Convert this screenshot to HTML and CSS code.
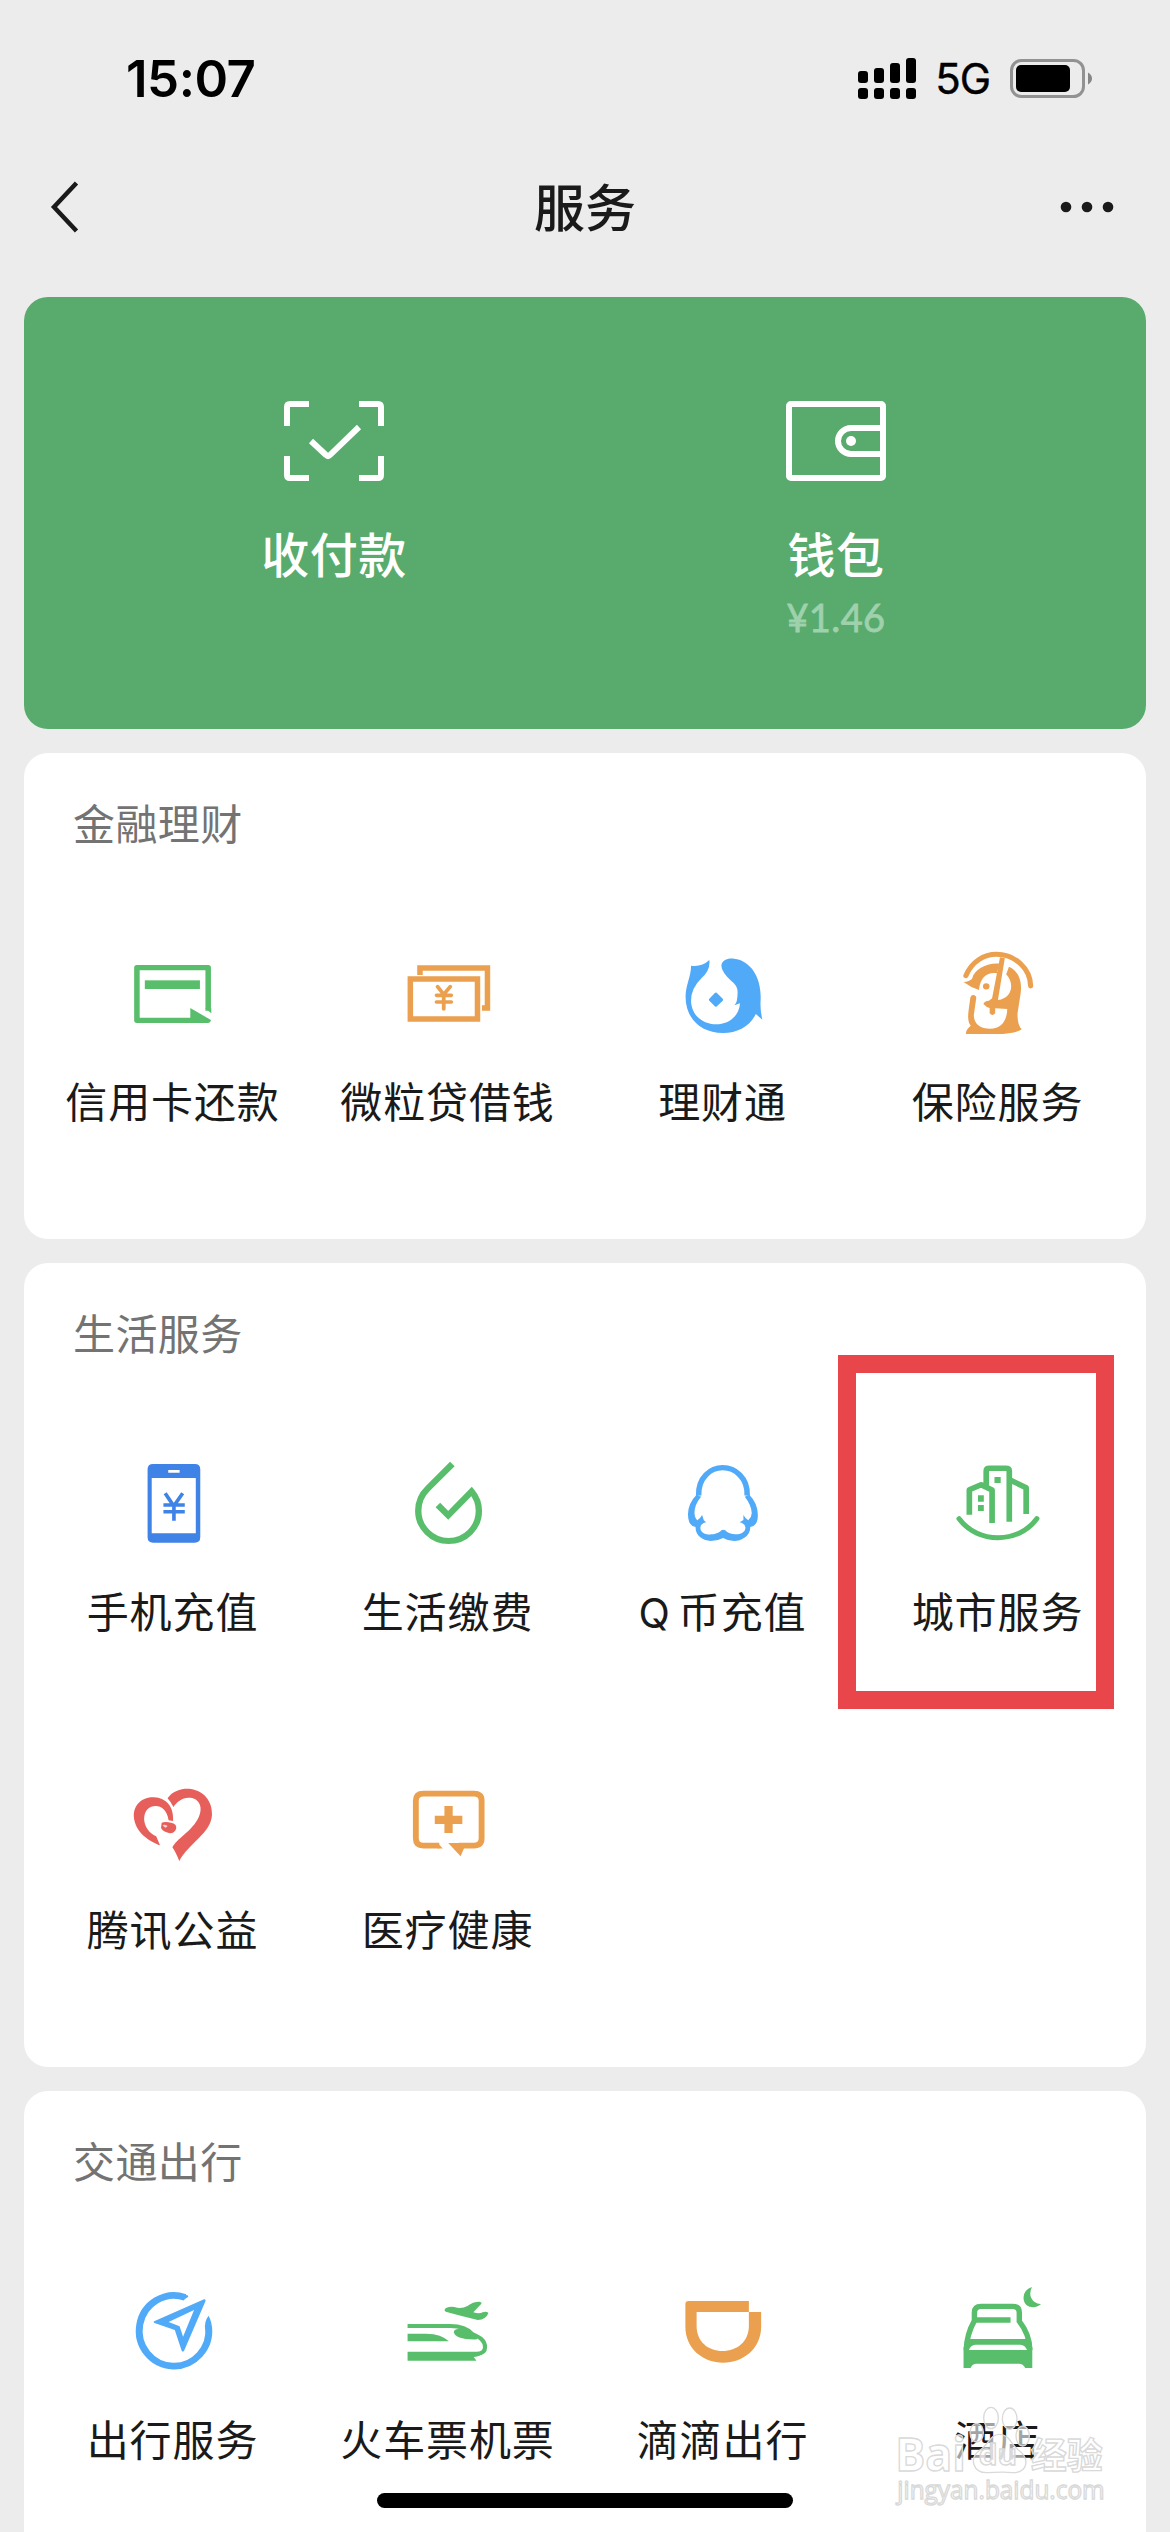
FILE: index.html
```html
<!DOCTYPE html>
<html lang="zh-CN">
<head>
<meta charset="utf-8">
<title>服务</title>
<link rel="stylesheet" href="styles.css">
</head>
<body>
<div class="screen">
  <div class="status-bar">
    <span class="time">15:07</span>
    <div class="status-right">
      <svg class="signal" viewBox="0 0 58 41">
        <rect x="0" y="13" width="10" height="12" rx="3"/><rect x="16" y="10" width="10" height="15" rx="3"/><rect x="32" y="5" width="10" height="20" rx="3"/><rect x="48" y="0" width="10" height="25" rx="3"/>
        <rect x="0" y="30" width="10" height="11" rx="3"/><rect x="16" y="30" width="10" height="11" rx="3"/><rect x="32" y="30" width="10" height="11" rx="3"/><rect x="48" y="30" width="10" height="11" rx="3"/>
      </svg>
      <span class="network">5G</span>
      <svg class="battery" viewBox="0 0 82 39">
        <rect x="1.5" y="1.5" width="72" height="36" rx="10" fill="none" stroke="#929292" stroke-width="3"/>
        <rect x="6" y="6" width="54" height="27" rx="5"/>
        <path d="M78 13.500Q82 16 82 19.500T78 25.500z" fill="#868686"/>
      </svg>
    </div>
  </div>
  <header class="nav-bar">
    <svg class="back" viewBox="0 0 30 54"><path d="M26.500 3 4 27l22.500 24"/></svg>
    <h1>服务</h1>
    <svg class="more" viewBox="0 0 54 12"><circle cx="6" cy="6" r="5.300"/><circle cx="27" cy="6" r="5.300"/><circle cx="48" cy="6" r="5.300"/></svg>
  </header>
  <main class="cards">
    <section class="pay-card">
      <a class="pay-item">
        <svg viewBox="0 0 100 80"><path d="M25 3H6Q3 3 3 6V25M75 3H94Q97 3 97 6V25M3 55V74Q3 77 6 77H25M97 55V74Q97 77 94 77H75M27 40 42 54Q44 56 46 54L75 26"/></svg>
        <span class="pay-label">收付款</span>
      </a>
      <a class="pay-item">
        <svg viewBox="0 0 100 80"><rect x="3" y="3" width="94" height="74" rx="2"/><path d="M97 27H65A13 13 0 0 0 65 53H97"/><circle class="dot" cx="65" cy="40" r="5"/></svg>
        <span class="pay-label">钱包</span>
        <span class="balance">¥1.46</span>
      </a>
    </section>

    <section class="card">
      <h2>金融理财</h2>
      <div class="grid">
        <a class="item">
          <svg class="icon green" viewBox="239.600 39 290.400 300" preserveAspectRatio="none">
            <path class="line" stroke-width="16" d="M487 242V113H280V271H450" stroke-linejoin="round"/><path d="M435 234 495 270Q494 279 485 279H435z"/><rect x="303" y="151" width="160" height="26"/><path d="M478 235 496 250V235z"/>
          </svg><span>信用卡还款</span></a>
        <a class="item">
          <svg class="icon orange" viewBox="1038.200 39 290.400 300" preserveAspectRatio="none">
            <path class="line" stroke-width="16" d="M1102 135V114H1298V234H1282M1074 147H1269V267H1074z"/><path class="line" stroke-width="11" stroke-linecap="round" stroke-linejoin="round" d="M1153 170 1171 193 1190 170M1150 196H1193M1150 216H1193M1171 195V237"/>
          </svg><span>微粒贷借钱</span></a>
        <a class="item">
          <svg class="icon sky" viewBox="152.500 39 290.400 300" preserveAspectRatio="none">
            <path d="M205 107Q235 112 258 90Q262 120 235 145Q205 175 205 212C205 255 240 283 277 283C315 283 345 258 347 220L331 226Q340 218 340 190Q342 168 322 153Q293 125 293 107C294 88 315 83 330 86C380 92 410 145 407 210Q405 240 412 269L393 252C375 290 340 309 298 309C230 309 189 262 189 200C189 165 205 140 205 107z"/><path d="M274 189Q277 186 280 189L297 206Q299 209 297 212L280 229Q277 232 274 229L258 212Q255 209 258 206z"/>
          </svg><span>理财通</span></a>
        <a class="item">
          <svg class="icon orange" viewBox="951 39 290.400 300" preserveAspectRatio="none">
            <path class="line" stroke-width="15" stroke-linecap="round" d="M1003 137C1020 95 1055 73 1092 73C1145 73 1190 115 1191 168"/>
            <path d="M1100 101 1093 130C1068 125 1044 140 1041 180Q1015 171 996 156Q1013 155 1021 146C1027 120 1060 98 1100 101z"/><circle cx="1062" cy="169" r="9.500"/>
            <path d="M1128 110C1160 125 1166 160 1162 190L1153 250Q1152 285 1165 298Q1145 312 1090 312H1003Q1003 298 1017 287Q1006 275 1011 240L1016 202Q1019 194 1026 195Q1034 197 1033 205L1026 255C1026 283 1045 296 1074 296C1106 296 1122 272 1123 237L1088 235V250Q1080 260 1072 250V234Q1062 232 1054 222Q1056 213 1070 212L1079 205L1102 82L1116 84L1096 210C1138 205 1145 160 1120 133z"/>
          </svg><span>保险服务</span></a>
      </div>
    </section>

    <section class="card">
      <h2>生活服务</h2>
      <div class="grid">
        <a class="item">
          <svg class="icon blue" viewBox="239.600 39 290.400 300" preserveAspectRatio="none">
            <path fill-rule="evenodd" d="M327 72H448Q464 72 464 88V292Q464 308 448 308H327Q311 308 311 292V88Q311 72 327 72zM323 114V280H451V114zM371 90V98H404V90z"/><path class="line" stroke-width="10.500" d="M362 160 387 198 413 160M357 195H419M357 215H419M387.500 195V242"/>
          </svg><span>手机充值</span></a>
        <a class="item">
          <svg class="icon green" viewBox="1038.200 39 290.400 300" preserveAspectRatio="none">
            <path class="line" stroke-width="18.500" d="M1196 72 1125 145C1100 170 1097 195 1097 212C1097 262 1137 303 1185 303C1235 303 1273 262 1273 212Q1273 180 1252 154L1184 226L1154 195"/>
          </svg><span>生活缴费</span></a>
        <a class="item">
          <svg class="icon sky" viewBox="152.500 339 290.400 300" preserveAspectRatio="none">
            <path class="line" stroke-width="16" d="M227 467C225 412 262 383 297 383C332 383 370 412 368 467"/>
            <path d="M374 464Q399 490 399 525Q399 558 377 561C377 590 350 603 330 603Q312 603 298 594Q282 603 262 603C240 602 217 588 218 561Q196 558 196 523Q196 490 221 464L234 470Q214 495 215 520Q216 535 223 541Q232 535 237 525L242 541L249 547Q232 551 232 563C232 590 280 588 293 571Q298 568 304 571C318 588 362 588 363 563Q362 551 346 547L357 540V525Q362 535 371 541Q382 530 381 518Q380 495 361 470z"/>
          </svg><span><span class="latin">Q</span>币充值</span></a>
        <a class="item">
          <svg class="icon green" viewBox="951 339 290.400 300" preserveAspectRatio="none">
            <path class="line" stroke-width="16.500" stroke-linejoin="round" d="M1013 524V449L1047 434L1079 450V549M1062 440V393Q1062 385 1072 385H1118Q1129 385 1129 393V545M1133 421 1178 443V522"/><path class="line" stroke-width="15" stroke-linecap="round" d="M983 536C1037 612 1156 612 1209 536"/><path d="M1038 466h17v19h-17zM1038 495h17v18h-17zM1086 411h18v18h-18z"/>
          </svg><span>城市服务</span><i class="highlight"></i></a>
        <a class="item">
          <svg class="icon red" viewBox="239.600 33 290.400 300" preserveAspectRatio="none">
            <path d="M369 115C385 90 415 84 437 87C475 93 500 125 498 165C495 220 430 250 403 303Q392 275 383 262C395 235 440 215 460 170C475 135 455 112 430 113C410 113 395 127 386 141Q378 125 369 115z"/><path d="M347 256C320 245 275 220 271 170C270 130 300 110 330 112C365 114 388 140 385 183L372 181C368 150 350 138 335 138C312 138 301 155 301 178C302 200 315 220 336 229z"/><path d="M352 188Q362 183 382 189Q396 192 394 206Q388 222 373 219Q352 213 350 203z"/><path d="M355 195Q362 192 369 198L364 203Q357 202 355 195z" fill="#f9d3d1"/>
          </svg><span>腾讯公益</span></a>
        <a class="item">
          <svg class="icon orange" viewBox="1038.200 33 290.400 300" preserveAspectRatio="none">
            <path class="line" stroke-width="17" d="M1158 257H1112Q1090 257 1090 235V122Q1090 101 1112 101H1258Q1281 101 1281 122V235Q1281 257 1258 257H1215"/><path d="M1184 249H1240L1230 265L1220 289zM1154 249 1168 265.500H1154zM1173 138h24v29h28v25h-28v27h-24v-27h-28v-25h28z"/>
          </svg><span>医疗健康</span></a>
      </div>
    </section>

    <section class="card">
      <h2>交通出行</h2>
      <div class="grid">
        <a class="item">
          <svg class="icon sky" viewBox="239.600 33 290.400 300" preserveAspectRatio="none">
            <path class="line" stroke-width="20" d="M420 82A101 106 0 1 0 488 170"/><path d="M488 137Q500 158 498 187L478 178Q475 155 488 137zM415 74 427 76Q433 80 424 84L415 90z"/><path fill-rule="evenodd" d="M330 154 475 88Q481 87 479 94L417 242Q413 247 410 242L390 180L331 159Q326 156 330 154zM372 156 404 169L414 200L446 120z"/>
          </svg><span>出行服务</span></a>
        <a class="item">
          <svg class="icon green" viewBox="1038.200 33 290.400 300" preserveAspectRatio="none">
            <path class="line" stroke-width="12" d="M1066 168H1190C1220 168 1240 175 1254 192C1276 202 1291 210 1291 232Q1291 250 1268 252"/><path d="M1200 186Q1202 172 1240 178L1268 196V208Q1205 210 1200 186zM1066 191H1120Q1165 192 1186 214H1066zM1066 245H1286Q1280 258 1258 261L1266 272H1066zM1174 118Q1180 108 1202 111Q1222 118 1240 108Q1255 95 1275 95Q1284 97 1279 103L1257 127Q1275 133 1284 127Q1294 122 1301 129Q1293 150 1270 150Q1230 140 1177 125Q1172 123 1174 118z"/>
          </svg><span>火车票机票</span></a>
        <a class="item">
          <svg class="icon orange" viewBox="149.700 33 285.100 300" preserveAspectRatio="none">
            <path d="M194 93H366V126H217V168C217 215 250 243 291 243C332 243 366 215 366 168V126H401V170C401 235 350 278 293 278C235 278 185 235 185 170V102Q185 93 194 93z"/>
          </svg><span>滴滴出行</span></a>
        <a class="item">
          <svg class="icon green" viewBox="933.700 33 285.100 300" preserveAspectRatio="none">
            <path class="line" stroke-width="15.500" d="M1009 155V128Q1009 109 1028 109H1118Q1137 109 1137 128V154Q1167 195 1167 240M1010 150Q986 195 986 240"/><path fill-rule="evenodd" d="M1009 142H1112V158H1009zM990 207H1162L1174 232V294H1154Q1148 281 1136 281H1015Q1003 281 998 294H978V232zM993 240H1159Q1154 225 1140 224H1012Q998 225 993 240zM1173 51Q1160 80 1182 97Q1190 103 1199 102C1185 118 1149 115 1149 83Q1149 60 1173 51z"/>
          </svg><span>酒店</span></a>
      </div>
    </section>
  </main>

  <div class="home-indicator"></div>
  <svg class="watermark" viewBox="30 90 660 330">
    <g class="mark">
      <ellipse cx="333" cy="144" rx="22" ry="32"/><ellipse cx="389" cy="146" rx="22" ry="32"/><ellipse cx="290" cy="188" rx="20" ry="28"/><ellipse cx="428" cy="198" rx="20" ry="30"/>
      <path d="M358 193C330 193 325 225 300 240C265 265 280 308 320 308C340 308 370 304 395 308C445 310 450 265 415 240C392 222 388 193 358 193z"/>
      <text x="46" y="303" font-size="138" font-weight="700" textLength="212" lengthAdjust="spacingAndGlyphs">Bai</text>
      <text x="296" y="286" font-size="84" font-weight="700" textLength="115" lengthAdjust="spacingAndGlyphs">du</text>
      <text x="452" y="296" font-size="108" font-weight="700" textLength="216">经验</text>
      <text x="52" y="388" font-size="74" textLength="622" lengthAdjust="spacingAndGlyphs">jingyan.baidu.com</text>
    </g>
  </svg>
</div>
</body>
</html>
```
FILE: styles.css
```css
* { box-sizing: border-box; }

body {
  margin: 0;
  background: #ececec;
  color: #1a1a1a;
  font-family: "Noto Sans CJK SC", "Noto Sans", sans-serif;
}

.screen {
  position: relative;
  width: 1170px;
  height: 2532px;
  overflow: hidden;
}

.status-bar {
  display: flex;
  justify-content: space-between;
  align-items: center;
  height: 156px;
  padding: 0 78px 0 126px;
  color: #000;
  font-family: Inter, sans-serif;
}

.time { font-size: 51px; font-weight: 600; letter-spacing: -0.5px; }
.status-right { display: flex; align-items: center; }
.signal { width: 58px; height: 41px; margin-right: 19px; }
.network { font-size: 42px; line-height: 50px; margin-right: 20px; padding-top: 2px; letter-spacing: -1px; -webkit-text-stroke: 0.4px; }
.battery { width: 82px; height: 39px; }

.nav-bar {
  display: flex;
  justify-content: space-between;
  align-items: center;
  height: 102px;
  padding: 0 56px 0 50px;
}

.nav-bar h1 { margin: 0; padding-bottom: 4px; font-size: 51px; font-weight: 500; line-height: 60px; }
.back { width: 30px; height: 54px; margin-right: 30px; fill: none; stroke: #1a1a1a; stroke-width: 4.500; }
.more { width: 54px; height: 12px; fill: #1a1a1a; }

.cards {
  display: flex;
  flex-direction: column;
  gap: 24px;
  padding: 39px 24px 0;
}

.pay-card {
  display: grid;
  grid-template-columns: 1fr 1fr;
  height: 432px;
  padding: 104px 59px 0;
  border-radius: 24px;
  background: #58ab6c;
  color: #fff;
}

.pay-item { display: flex; flex-direction: column; align-items: center; }
.pay-item svg { width: 100px; height: 80px; fill: none; stroke: #fff; stroke-width: 6; }
.pay-item .dot { fill: #fff; stroke: none; }
.pay-label { margin-top: 41px; font-size: 48px; font-weight: 500; line-height: 60px; letter-spacing: 0.5px; }
.balance { margin-top: 11px; font-family: Lato, sans-serif; font-size: 38px; line-height: 48px; letter-spacing: 0.4px; color: #9fd1ad; -webkit-text-stroke: 0.8px; }

.card { padding: 0 11px; border-radius: 24px; background: #fff; }
.card h2 {
  height: 168px;
  margin: 0;
  padding: 39px 0 0 38px;
  color: #737373;
  font-size: 42px;
  font-weight: 400;
  line-height: 60px;
  letter-spacing: 0.4px;
}

.grid { display: grid; grid-template-columns: repeat(4, 275px); }
.item {
  position: relative;
  display: flex;
  flex-direction: column;
  align-items: center;
  gap: 32px;
  height: 318px;
  padding-top: 22px;
  font-size: 42px;
  line-height: 50px;
  letter-spacing: 0.9px;
  white-space: nowrap;
}

.latin { margin-right: 7px; font-family: Inter, sans-serif; font-size: 41px; }

.highlight {
  position: absolute;
  left: -22px;
  top: -76px;
  width: 276px;
  height: 354px;
  border: 18px solid #e8464b;
}

.icon { width: 100px; height: 100px; fill: currentColor; }
.line { fill: none; stroke: currentColor; }
.green { color: #59be6b; }
.orange { color: #eba04f; }
.sky { color: #51aaf8; }
.blue { color: #3f83e7; }
.red { color: #e75f5b; }

.home-indicator {
  position: absolute;
  left: 377px;
  top: 2493px;
  width: 416px;
  height: 15px;
  border-radius: 8px;
  background: #000;
}

.watermark { position: absolute; left: 890px; top: 2400px; width: 220px; height: 110px; }
.mark {
  fill: rgba(255, 255, 255, 0.6);
  stroke: #d9d9d9;
  stroke-width: 4;
  font-family: "Open Sans", "Noto Sans CJK SC", sans-serif;
}
```
